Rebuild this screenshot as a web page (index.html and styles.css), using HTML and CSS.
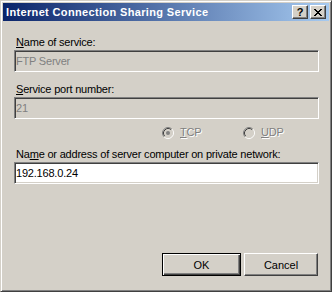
FILE: index.html
```html
<!DOCTYPE html>
<html lang="en">
<head>
    <meta charset="UTF-8">
    <meta name="viewport" content="width=device-width, initial-scale=1.0">
    <title>Internet Connection Sharing Service</title>
    <link rel="stylesheet" href="styles.css">
</head>
<body>
    <div class="window">
        <div class="titlebar">
            <span class="title">Internet Connection Sharing Service</span>
            <div class="caption-buttons">
                <button class="cap-btn help" type="button">?</button>
                <button class="cap-btn close" type="button">
                    <svg width="8" height="7" viewBox="0 0 8 7" shape-rendering="crispEdges">
                        <path fill="#000" d="M0 0h2v1h-2z M6 0h2v1h-2z M1 1h2v1h-2z M5 1h2v1h-2z M2 2h4v1h-4z M3 3h2v1h-2z M2 4h4v1h-4z M1 5h2v1h-2z M5 5h2v1h-2z M0 6h2v1h-2z M6 6h2v1h-2z"/>
                    </svg>
                </button>
            </div>
        </div>

        <form class="dialog" id="serviceForm">
            <label class="field-label" for="serviceName"><u>N</u>ame of service:</label>
            <input class="edit" type="text" id="serviceName" value="FTP Server" disabled>

            <label class="field-label gap" for="servicePort"><u>S</u>ervice port number:</label>
            <input class="edit" type="text" id="servicePort" value="21" disabled>

            <div class="protocols">
                <span class="radio">
                    <svg width="12" height="12" viewBox="0 0 12 12">
                        <circle cx="6" cy="6" r="5" fill="#d4d0c8"/>
                        <path d="M2.11 9.89A5.5 5.5 0 0 1 9.89 2.11" fill="none" stroke="#808080"/>
                        <path d="M9.89 2.11A5.5 5.5 0 0 1 2.11 9.89" fill="none" stroke="#ffffff"/>
                        <path d="M2.82 9.18A4.5 4.5 0 0 1 9.18 2.82" fill="none" stroke="#404040"/>
                        <path d="M9.18 2.82A4.5 4.5 0 0 1 2.82 9.18" fill="none" stroke="#d4d0c8"/>
                        <circle cx="6" cy="6" r="2" fill="#808080"/>
                    </svg>
                    <span class="radio-text"><u>T</u>CP</span>
                </span>
                <span class="radio">
                    <svg width="12" height="12" viewBox="0 0 12 12">
                        <circle cx="6" cy="6" r="5" fill="#d4d0c8"/>
                        <path d="M2.11 9.89A5.5 5.5 0 0 1 9.89 2.11" fill="none" stroke="#808080"/>
                        <path d="M9.89 2.11A5.5 5.5 0 0 1 2.11 9.89" fill="none" stroke="#ffffff"/>
                        <path d="M2.82 9.18A4.5 4.5 0 0 1 9.18 2.82" fill="none" stroke="#404040"/>
                        <path d="M9.18 2.82A4.5 4.5 0 0 1 2.82 9.18" fill="none" stroke="#d4d0c8"/>
                    </svg>
                    <span class="radio-text"><u>U</u>DP</span>
                </span>
            </div>

            <label class="field-label address" for="serverAddress">Na<u>m</u>e or address of server computer on private network:</label>
            <input class="edit" type="text" id="serverAddress" value="192.168.0.24">

            <div class="actions">
                <button class="btn default" type="submit">OK</button>
                <button class="btn cancel" type="button">Cancel</button>
            </div>
        </form>
    </div>
</body>
</html>
```

FILE: styles.css
```css
body {
    margin: 0;
    font-family: "Liberation Sans", Arial, sans-serif;
    font-size: 11px;
    background-color: #d4d0c8;
}

.window {
    width: 332px;
    height: 292px;
    box-sizing: border-box;
    display: flex;
    flex-direction: column;
    padding: 2px;
    background-color: #d4d0c8;
    border: 1px solid;
    border-color: #d4d0c8 #404040 #404040 #d4d0c8;
    box-shadow: inset 1px 1px #ffffff, inset -1px -1px #808080;
}

.titlebar {
    height: 18px;
    display: flex;
    align-items: flex-start;
    justify-content: space-between;
    padding: 0 3px;
    background: linear-gradient(to right, #0a246a, #a6caf0);
}

.title {
    color: #ffffff;
    font-weight: bold;
    line-height: 18px;
    letter-spacing: 0.35px;
    white-space: nowrap;
}

.caption-buttons {
    display: flex;
    gap: 2px;
    margin-top: 2px;
}

.cap-btn {
    width: 16px;
    height: 14px;
    padding: 0;
    display: flex;
    align-items: center;
    justify-content: center;
    background-color: #d4d0c8;
    border: 1px solid;
    border-color: #ffffff #404040 #404040 #ffffff;
    box-shadow: inset -1px -1px #808080;
    font-family: "Liberation Sans", Arial, sans-serif;
    font-size: 11px;
    font-weight: bold;
    line-height: 12px;
    color: #000000;
}

.dialog {
    flex: 1;
    display: flex;
    flex-direction: column;
    margin: 0;
    padding: 15px 10px 13px 11px;
    letter-spacing: -0.2px;
}

.field-label {
    display: block;
    line-height: 13px;
    margin: 0 0 1px 2px;
    color: #000000;
}

.field-label.gap {
    margin-top: 11px;
}

.field-label.address {
    margin-top: 9px;
}

.edit {
    height: 22px;
    box-sizing: border-box;
    margin: 0;
    padding: 0 0 0 1px;
    font-family: "Liberation Sans", Arial, sans-serif;
    font-size: 11px;
    letter-spacing: -0.2px;
    color: #000000;
    background-color: #ffffff;
    border: 1px solid;
    border-color: #808080 #ffffff #ffffff #808080;
    box-shadow: inset 1px 1px #404040, inset -1px -1px #d4d0c8;
    outline: none;
}

.edit:disabled {
    background-color: #d4d0c8;
    color: #808080;
    -webkit-text-fill-color: #808080;
}

.protocols {
    display: grid;
    grid-template-columns: 81px auto;
    padding-left: 148px;
    margin-top: 7px;
    height: 13px;
}

.radio {
    display: flex;
    align-items: center;
    gap: 6px;
    line-height: 13px;
}

.radio-text {
    color: #808080;
    text-shadow: 1px 1px #ffffff;
}

.actions {
    margin-top: auto;
    display: flex;
    justify-content: flex-end;
    gap: 3px;
    padding-right: 1px;
}

.btn {
    height: 23px;
    padding: 0;
    font-family: "Liberation Sans", Arial, sans-serif;
    font-size: 11px;
    color: #000000;
    background-color: #d4d0c8;
    border: 1px solid;
    border-color: #ffffff #404040 #404040 #ffffff;
    box-shadow: inset -1px -1px #808080;
}

.btn.default {
    width: 79px;
    border-color: #000000;
    box-shadow: inset 1px 1px #ffffff, inset -1px -1px #404040, inset -2px -2px #808080;
}

.btn.cancel {
    width: 74px;
}
```
